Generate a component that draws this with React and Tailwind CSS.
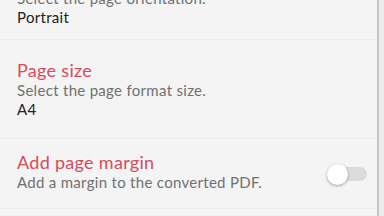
import React from "react";

const font = { fontFamily: "Lato, 'Open Sans', sans-serif" };

const Toggle = () => (
    <div className="relative w-[40px] h-[22px] shrink-0">
        <div className="absolute left-[3px] right-0 top-[4px] h-[14px] rounded-full bg-[#dcdcdc]" />
        <div className="absolute left-0 top-px w-[21px] h-[21px] rounded-full bg-white shadow-[0_1px_3px_rgba(0,0,0,0.35)]" />
    </div>
);

export default function App() {
    return (
        <div className="w-[384px] h-[216px] overflow-hidden flex bg-[#f4f4f4]" style={font}>
            <div className="flex-1 flex flex-col">
                {/* Page orientation (cut off at top) */}
                <div className="h-[40px] shrink-0 flex flex-col justify-end pl-[17px] pb-[12px] border-b border-[#ebebeb] overflow-hidden">
                    <div className="text-[18px] leading-[22px] text-[#d84a5c]">Page orientation</div>
                    <div className="text-[15px] leading-[19px] text-[#707070] tracking-[0.3px]">Select the page orientation.</div>
                    <div className="text-[15px] leading-[19px] text-[#222] tracking-[0.3px]">Portrait</div>
                </div>

                {/* Page size */}
                <div className="h-[99px] shrink-0 flex flex-col justify-center pl-[17px] border-b border-[#ebebeb]">
                    <div className="text-[18px] leading-[22px] text-[#d84a5c] tracking-[0.3px]">Page size</div>
                    <div className="text-[15px] leading-[19px] text-[#707070] tracking-[0.3px]">Select the page format size.</div>
                    <div className="text-[15px] leading-[19px] text-[#222] tracking-[0.3px]">A4</div>
                </div>

                {/* Page margin */}
                <div className="h-[70px] shrink-0 flex items-center justify-between pl-[17px] pr-[10px] border-b border-[#ebebeb]">
                    <div className="flex flex-col mb-[5px]">
                        <div className="text-[18px] leading-[22px] text-[#d84a5c] tracking-[0.3px]">Add page margin</div>
                        <div className="text-[15px] leading-[19px] text-[#707070] tracking-[0.3px]">Add a margin to the converted PDF.</div>
                    </div>
                    <Toggle />
                </div>
            </div>
            <div className="w-[2px] bg-[#c6c6c6]" />
            <div className="w-[5px] bg-[#ececec]" />
        </div>
    );
}
